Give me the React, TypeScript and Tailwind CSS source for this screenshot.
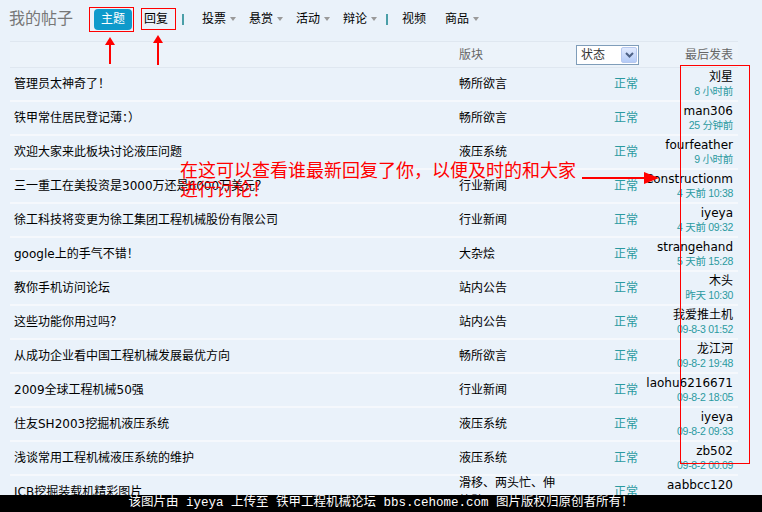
import React from "react";

type Row = {
  title: string;
  forum: string;
  user: string;
  time: string;
};

const rows: Row[] = [
  { title: "管理员太神奇了！", forum: "畅所欲言", user: "刘星", time: "8 小时前" },
  { title: "铁甲常住居民登记薄：）", forum: "畅所欲言", user: "man306", time: "25 分钟前" },
  { title: "欢迎大家来此板块讨论液压问题", forum: "液压系统", user: "fourfeather", time: "9 小时前" },
  { title: "三一重工在美投资是3000万还是6000万美元？", forum: "行业新闻", user: "Constructionm", time: "4 天前 10:38" },
  { title: "徐工科技将变更为徐工集团工程机械股份有限公司", forum: "行业新闻", user: "iyeya", time: "4 天前 09:32" },
  { title: "google上的手气不错！", forum: "大杂烩", user: "strangehand", time: "5 天前 15:28" },
  { title: "教你手机访问论坛", forum: "站内公告", user: "木头", time: "昨天 10:30" },
  { title: "这些功能你用过吗？", forum: "站内公告", user: "我爱推土机", time: "09-8-3 01:52" },
  { title: "从成功企业看中国工程机械发展最优方向", forum: "畅所欲言", user: "龙江河", time: "09-8-2 19:48" },
  { title: "2009全球工程机械50强", forum: "行业新闻", user: "laohu6216671", time: "09-8-2 18:05" },
  { title: "住友SH2003挖掘机液压系统", forum: "液压系统", user: "iyeya", time: "09-8-2 09:33" },
  { title: "浅谈常用工程机械液压系统的维护", forum: "液压系统", user: "zb502", time: "09-8-2 00:09" },
  { title: "JCB挖掘装载机精彩图片", forum: "滑移、两头忙、伸缩臂", user: "aabbcc120", time: "09-8-1 22:15" },
];

function Caret() {
  return (
    <span className="ml-[4px] inline-block h-0 w-0 border-x-[3.5px] border-t-[4px] border-x-transparent border-t-[#9a9a9a]" />
  );
}

function Sep({ className }: { className: string }) {
  return <span className={"h-[11px] w-[2px] bg-[#4a9fa8] " + className} />;
}

function NavItem({ label, caret, className }: { label: string; caret?: boolean; className: string }) {
  return (
    <span className={"flex items-center text-[12px] text-black " + className}>
      {label}
      {caret && <Caret />}
    </span>
  );
}

function UpArrow({ x, top, bottom }: { x: number; top: number; bottom: number }) {
  return (
    <svg
      className="absolute"
      style={{ left: x - 6, top: top }}
      width={12}
      height={bottom - top}
      viewBox={`0 0 12 ${bottom - top}`}
    >
      <polygon points="6,0 1,8 11,8" fill="#f00" />
      <rect x={5} y={7} width={2} height={bottom - top - 7} fill="#f00" />
    </svg>
  );
}

export default function App() {
  return (
    <div className="relative h-[512px] w-[762px] overflow-hidden bg-[#eaf2fa] font-['DejaVu_Sans','Noto_Sans_CJK_SC',sans-serif]">
      {/* top tabs */}
      <div className="mb-[3px] flex h-[38px] items-center">
        <span className="ml-[9px] text-[16px] text-[#777]">我的帖子</span>
        <span className="ml-[21px] flex h-[21px] w-[38px] items-center justify-center rounded-[4px] bg-[#0e9acb] text-[12px] text-white">
          主题
        </span>
        <span className="ml-[12px] text-[12px] text-black">回复</span>
        <Sep className="ml-[14px]" />
        <NavItem label="投票" caret className="ml-[18px]" />
        <NavItem label="悬赏" caret className="ml-[13px]" />
        <NavItem label="活动" caret className="ml-[13px]" />
        <NavItem label="辩论" caret className="ml-[13px]" />
        <Sep className="ml-[9px]" />
        <NavItem label="视频" className="ml-[14px]" />
        <NavItem label="商品" caret className="ml-[19px]" />
      </div>

      {/* header band */}
      <div className="ml-[10px] flex h-[27px] w-[728px] items-center border-y border-[#dfe7f0] bg-[#ecf3fa] text-[12px] text-[#666]">
        <span className="w-[449px] shrink-0" />
        <span className="w-[117px] shrink-0">版块</span>
        <div className="flex h-[20px] w-[63px] shrink-0 items-center border border-[#7f9db9] bg-white">
          <span className="pl-[4px] text-[12px] text-[#333]">状态</span>
          <span className="ml-auto mr-[1px] flex h-[16px] w-[16px] items-center justify-center rounded-[2px] border border-[#b6c8ef] bg-gradient-to-b from-[#e1eafe] to-[#b4cbf7]">
            <svg width="9" height="6" viewBox="0 0 9 6">
              <path d="M1 1 L4.5 4.5 L8 1" stroke="#4d6185" strokeWidth="2" fill="none" />
            </svg>
          </span>
        </div>
        <span className="flex-1 pr-[5px] text-right">最后发表</span>
      </div>

      {/* rows */}
      <div className="ml-[10px] flex w-[728px] flex-col">
        {rows.map((r, i) => (
          <div key={i} className="flex h-[34px] shrink-0 items-center border-b-2 border-[#f5f8fc]">
            <span className="w-[449px] shrink-0 whitespace-nowrap pl-[4px] text-[12px] text-black">{r.title}</span>
            <span className="w-[100px] shrink-0 text-[12px] leading-[18px] text-black">{r.forum}</span>
            <span className="w-[55px] shrink-0" />
            <span className="w-[60px] shrink-0 text-[12px] text-[#2b9aa0]">正常</span>
            <div className="flex min-w-0 flex-1 flex-col items-end self-start pr-[5px] pt-[2px]">
              <span className="whitespace-nowrap text-[12px] leading-[15px] text-black">{r.user}</span>
              <span className="whitespace-nowrap font-['Liberation_Sans','Noto_Sans_CJK_SC',sans-serif] text-[10.5px] leading-[13px] tracking-[-0.3px] text-[#2b9aa0]">
                {r.time}
              </span>
            </div>
          </div>
        ))}
      </div>

      {/* annotations */}
      <div className="absolute left-[89px] top-[7px] h-[25px] w-[45px] border border-[#f00]" />
      <div className="absolute left-[141px] top-[8px] h-[22px] w-[35px] border border-[#f00]" />
      <UpArrow x={110} top={37} bottom={64} />
      <UpArrow x={158} top={35} bottom={65} />
      <div className="absolute left-[680px] top-[65px] h-[399px] w-[70px] border border-[#f00]" />
      <div className="absolute left-[180px] top-[161px] text-[18px] leading-[19px] text-[#f00]">
        <div>在这可以查看谁最新回复了你，以便及时的和大家</div>
        <div>进行讨论！</div>
      </div>
      <svg className="absolute left-[580px] top-[170px]" width="82" height="16" viewBox="0 0 82 16">
        <rect x="2" y="7" width="66" height="2" fill="#f00" />
        <polygon points="64,2 79,8 64,14" fill="#f00" />
      </svg>

      {/* watermark */}
      <div className="absolute bottom-0 left-0 h-[17px] w-full bg-black text-center font-['Liberation_Mono','Noto_Sans_CJK_SC',monospace] text-[12.5px] leading-[17px] text-white">
        该图片由 iyeya 上传至 铁甲工程机械论坛 bbs.cehome.com 图片版权归原创者所有！
      </div>
    </div>
  );
}
